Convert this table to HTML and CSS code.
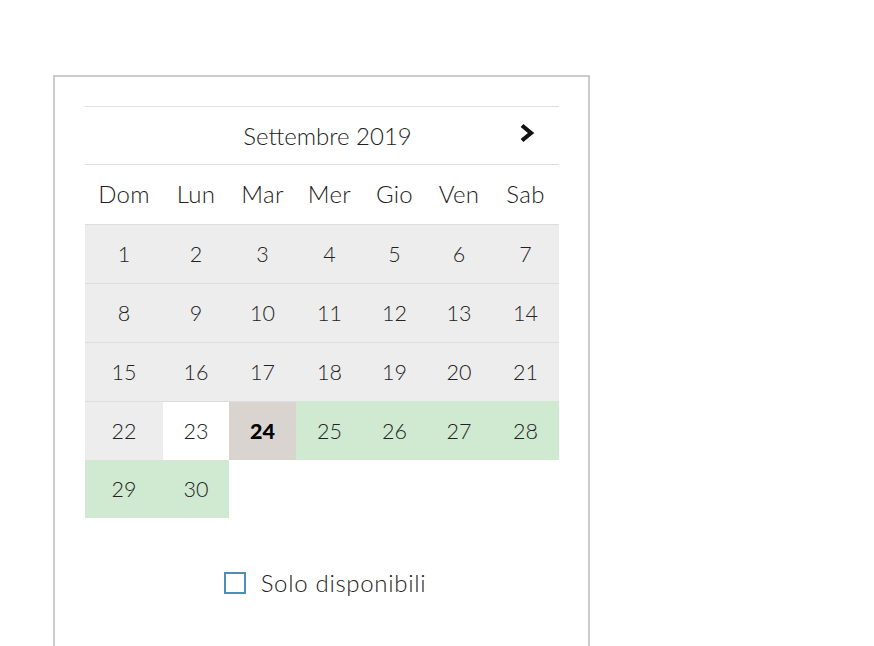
FILE: index.html
```html
<!DOCTYPE html>
<html lang="it">
<head>
<meta charset="utf-8">
<title>Calendario</title>
<link rel="stylesheet" href="styles.css">
</head>
<body>
<div class="panel">
  <div class="calendar">
    <div class="head">
      <div class="nav"></div>
      <div class="title">Settembre 2019</div>
      <div class="nav">
        <svg class="chev" width="16" height="20" viewBox="0 0 16 20"><polyline points="3,2.5 12,10 3,17.5" fill="none" stroke="#111" stroke-width="4.2" stroke-linejoin="miter"/></svg>
      </div>
    </div>
    <div class="grid weekdays">
      <div>Dom</div><div>Lun</div><div>Mar</div><div>Mer</div><div>Gio</div><div>Ven</div><div>Sab</div>
    </div>
    <div class="grid days">
      <div class="d past">1</div><div class="d past">2</div><div class="d past">3</div><div class="d past">4</div><div class="d past">5</div><div class="d past">6</div><div class="d past">7</div>
      <div class="d past">8</div><div class="d past">9</div><div class="d past">10</div><div class="d past">11</div><div class="d past">12</div><div class="d past">13</div><div class="d past">14</div>
      <div class="d past">15</div><div class="d past">16</div><div class="d past">17</div><div class="d past">18</div><div class="d past">19</div><div class="d past">20</div><div class="d past">21</div>
      <div class="d past">22</div><div class="d free">23</div><div class="d today">24</div><div class="d avail">25</div><div class="d avail">26</div><div class="d avail">27</div><div class="d avail">28</div>
      <div class="d avail last">29</div><div class="d avail last">30</div><div class="d empty last"></div><div class="d empty last"></div><div class="d empty last"></div><div class="d empty last"></div><div class="d empty last"></div>
    </div>
  </div>
  <label class="filter">
    <span class="box"></span>
    <span class="label">Solo disponibili</span>
  </label>
</div>
</body>
</html>
```
FILE: styles.css
```css
html, body {
  margin: 0;
  padding: 0;
  background: #fff;
}
body {
  font-family: "Lato", "Open Sans", sans-serif;
  font-weight: 300;
  color: #222;
  height: 646px;
  overflow: hidden;
}
.panel {
  margin: 75px 0 0 53px;
  width: 537px;
  height: 571px;
  border: 2px solid #cccccc;
  border-bottom: none;
  padding: 29px 0 0 30px;
  box-sizing: border-box;
}
.calendar {
  width: 474px;
}
.head {
  display: grid;
  grid-template-columns: 78px 329px 67px;
  height: 59px;
  border-top: 1px solid #dddddd;
  border-bottom: 1px solid #dddddd;
  box-sizing: border-box;
  align-items: center;
}
.title {
  text-align: center;
  font-size: 24px;
  margin-top: -1px;
}
.nav {
  display: flex;
  justify-content: center;
  align-items: center;
}
.chev {
  display: block;
  margin-top: -5px;
  margin-left: 2px;
}
.grid {
  display: grid;
  grid-template-columns: 78px 66px 67px 67px 63px 66px 67px;
}
.weekdays div {
  height: 59px;
  display: flex;
  align-items: center;
  justify-content: center;
  font-size: 24px;
  padding-bottom: 3px;
  box-sizing: border-box;
  letter-spacing: 0.3px;
}
.d {
  height: 59px;
  display: flex;
  align-items: center;
  justify-content: center;
  font-size: 21.5px;
  border-top: 1px solid #dddddd;
  box-sizing: border-box;
}
.past { background: #ededed; }
.free { background: #ffffff; }
.today { background: #dad4d1; font-weight: 900; color: #000; }
.avail { background: #d0ead2; border-top-color: #d0ead2; }
.last { border-top: none; height: 58px; }
.empty { background: transparent; }
.filter {
  display: flex;
  align-items: center;
  justify-content: center;
  width: 474px;
  margin-top: 50px;
  gap: 15px;
  padding-left: 6px;
  box-sizing: border-box;
}
.box {
  width: 22px;
  height: 22px;
  border: 2px solid #4a8fb8;
  box-sizing: border-box;
  display: block;
}
.label {
  font-size: 24px;
  letter-spacing: 0.7px;
}
```
